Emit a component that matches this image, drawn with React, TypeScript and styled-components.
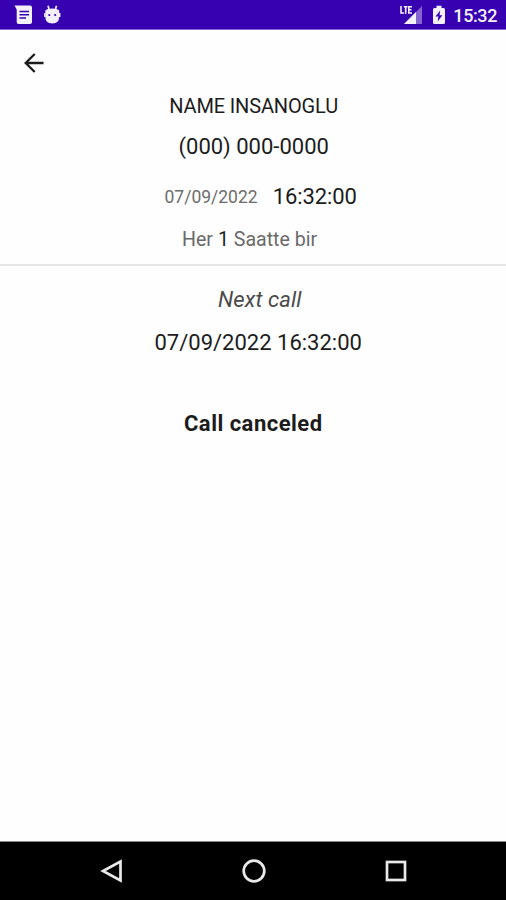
import React from "react";
import styled, { createGlobalStyle } from "styled-components";

const GlobalStyle = createGlobalStyle`
  html, body { margin: 0; padding: 0; background: #fefefe; }
  * { box-sizing: border-box; }
`;

const Screen = styled.div`
  width: 506px;
  height: 900px;
  display: flex;
  flex-direction: column;
  overflow: hidden;
  background: #fefefe;
  color: #1c1c1c;
  font-family: Roboto, sans-serif;
`;

const StatusBar = styled.header`
  height: 30px;
  flex: none;
  display: flex;
  justify-content: space-between;
  padding: 0 9px 0 14px;
  background: #3700b1;
  border-bottom: 1px solid #8b6ad0;
`;

const StatusGroup = styled.div<{ $gap: number }>`
  display: flex;
  align-items: center;
  gap: ${(p) => p.$gap}px;
  height: 30px;
`;

const Clock = styled.span`
  font-size: 18px;
  font-weight: 500;
  line-height: 30px;
  letter-spacing: -0.4px;
  color: #f4f0fc;
  padding-top: 2px;
  margin-left: -1px;
`;

const Toolbar = styled.nav`
  height: 64px;
  flex: none;
  display: flex;
  align-items: center;
  padding: 2px 0 0 22px;
`;

const IconButton = styled.button`
  display: flex;
  padding: 0;
  border: 0;
  background: none;
`;

const Section = styled.section<{ $top: number }>`
  display: flex;
  flex-direction: column;
  flex: none;
  padding-top: ${(p) => p.$top}px;
`;

const Line = styled.div<{ $height: number; $left: number; $gap?: number }>`
  height: ${(p) => p.$height}px;
  display: flex;
  align-items: center;
  gap: ${(p) => p.$gap ?? 0}px;
  padding-left: ${(p) => p.$left}px;
  line-height: ${(p) => p.$height}px;
`;

const Label = styled.span<{ $size: number; $spacing?: number; $color?: string; $weight?: number; $italic?: boolean }>`
  font-size: ${(p) => p.$size}px;
  letter-spacing: ${(p) => p.$spacing ?? 0}px;
  color: ${(p) => p.$color ?? "#1c1c1c"};
  font-weight: ${(p) => p.$weight ?? 400};
  font-style: ${(p) => (p.$italic ? "italic" : "normal")};
  white-space: pre;
`;

const Divider = styled.hr`
  width: 100%;
  height: 2px;
  flex: none;
  margin: 3px 0 0;
  border: 0;
  background: #e8e8e8;
`;

const NavBar = styled.footer`
  height: 59px;
  flex: none;
  margin-top: auto;
  display: flex;
  align-items: center;
  justify-content: center;
  gap: 118px;
  padding-left: 2px;
  background: #000;
  border-top: 1px solid #8a8a8a;
`;

const MessageIcon = () => (
  <svg width="19" height="22" viewBox="0 0 19 22">
    <path d="M0.500 1.500H16Q18 1.500 18 3.500V18Q18 20 16 20H4.500Q2.700 20 2.700 18V5.500Z" fill="#f3effb" />
    <path d="M5.500 7.500H15M5.500 10.700H15M5.500 14H12" stroke="#3700b1" strokeWidth="1.500" />
  </svg>
);

const AndroidIcon = () => (
  <svg width="17" height="20" viewBox="0 0 17 20">
    <path d="M4 0.800L5 4M12.500 0.800L11.500 4" stroke="#f3effb" strokeWidth="1.700" />
    <path d="M1.300 5.500Q3 3.500 8.250 3.500Q13.500 3.500 15.200 5.500V12Q15 18.500 8.250 18.500Q1.500 18.500 1.300 12Z" fill="#f3effb" />
    <path d="M0.800 8V12M15.700 8V12" stroke="#f3effb" strokeWidth="1.400" />
    <circle cx="5.300" cy="10" r="1.100" fill="#3700b1" />
    <circle cx="11.200" cy="10" r="1.100" fill="#3700b1" />
  </svg>
);

const SignalIcon = () => (
  <svg width="24" height="20" viewBox="0 0 24 20">
    <path d="M22 1V19H4Z" fill="#8665d0" />
    <path d="M16 7V19H4Z" fill="#f3effb" />
    <path d="M0 0H13V10H0Z" fill="#3700b1" />
    <path d="M1 1V8H4M3.800 1.700H7.500M5.700 1.700V8.700M12 1.700H8.800V8H12M8.800 4.800H11.500" fill="none" stroke="#f3effb" strokeWidth="1.600" />
  </svg>
);

const BatteryIcon = () => (
  <svg width="14" height="20" viewBox="0 0 14 20">
    <path d="M4.500 0.800H9.500V3H11.500Q13 3 13 4.500V17.500Q13 19 11.500 19H2.500Q1 19 1 17.500V4.500Q1 3 2.500 3H4.500Z" fill="#f3effb" />
    <path d="M8.200 5.500L3.500 11.600H6.400L5.700 16.500L10.400 10.300H7.500Z" fill="#3700b1" />
  </svg>
);

const BackArrow = () => (
  <svg width="24" height="24" viewBox="0 0 24 24">
    <path d="M21.500 12H3.500M12.700 3L3.700 12L12.700 21" fill="none" stroke="#1b1b1b" strokeWidth="2.300" />
  </svg>
);

const NavIcon = ({ children }: { children: React.ReactNode }) => (
  <svg width="24" height="26" viewBox="0 0 24 26" fill="none" stroke="#e9e9e9" strokeWidth="2.700">
    {children}
  </svg>
);

export default function App() {
  return (
    <Screen>
      <GlobalStyle />
      <StatusBar>
        <StatusGroup $gap={11}>
          <MessageIcon />
          <AndroidIcon />
        </StatusGroup>
        <StatusGroup $gap={8}>
          <SignalIcon />
          <BatteryIcon />
          <Clock>15:32</Clock>
        </StatusGroup>
      </StatusBar>
      <Toolbar>
        <IconButton aria-label="Back">
          <BackArrow />
        </IconButton>
      </Toolbar>
      <Section $top={0}>
        <Line $height={24} $left={169.2}>
          <Label $size={20} $spacing={-0.14}>NAME INSANOGLU</Label>
        </Line>
        <Line $height={57} $left={178.5}>
          <Label $size={22}>(000) 000-0000</Label>
        </Line>
        <Line $height={44} $left={164.5} $gap={15}>
          <Label $size={17.5} $color="#6c6c6c">07/09/2022</Label>
          <Label $size={22} $spacing={-0.1}>16:32:00</Label>
        </Line>
        <Line $height={42} $left={182}>
          <Label $size={19.6} $color="#6a6a6a">Her </Label>
          <Label $size={19.6}>1</Label>
          <Label $size={19.6} $color="#6a6a6a"> Saatte bir</Label>
        </Line>
      </Section>
      <Divider />
      <Section $top={14}>
        <Line $height={40} $left={218}>
          <Label $size={22} $spacing={0.1} $color="#4a4a4a" $italic>Next call</Label>
        </Line>
        <Line $height={45} $left={154.5}>
          <Label $size={22}>07/09/2022 16:32:00</Label>
        </Line>
      </Section>
      <Section $top={39}>
        <Line $height={40} $left={184}>
          <Label $size={22} $weight={700} $spacing={0.48}>Call canceled</Label>
        </Line>
      </Section>
      <NavBar>
        <NavIcon><path d="M20.500 3.500V22.500L3 13Z" /></NavIcon>
        <NavIcon><circle cx="12" cy="13" r="10.300" /></NavIcon>
        <NavIcon><rect x="3" y="4" width="18" height="18" /></NavIcon>
      </NavBar>
    </Screen>
  );
}
